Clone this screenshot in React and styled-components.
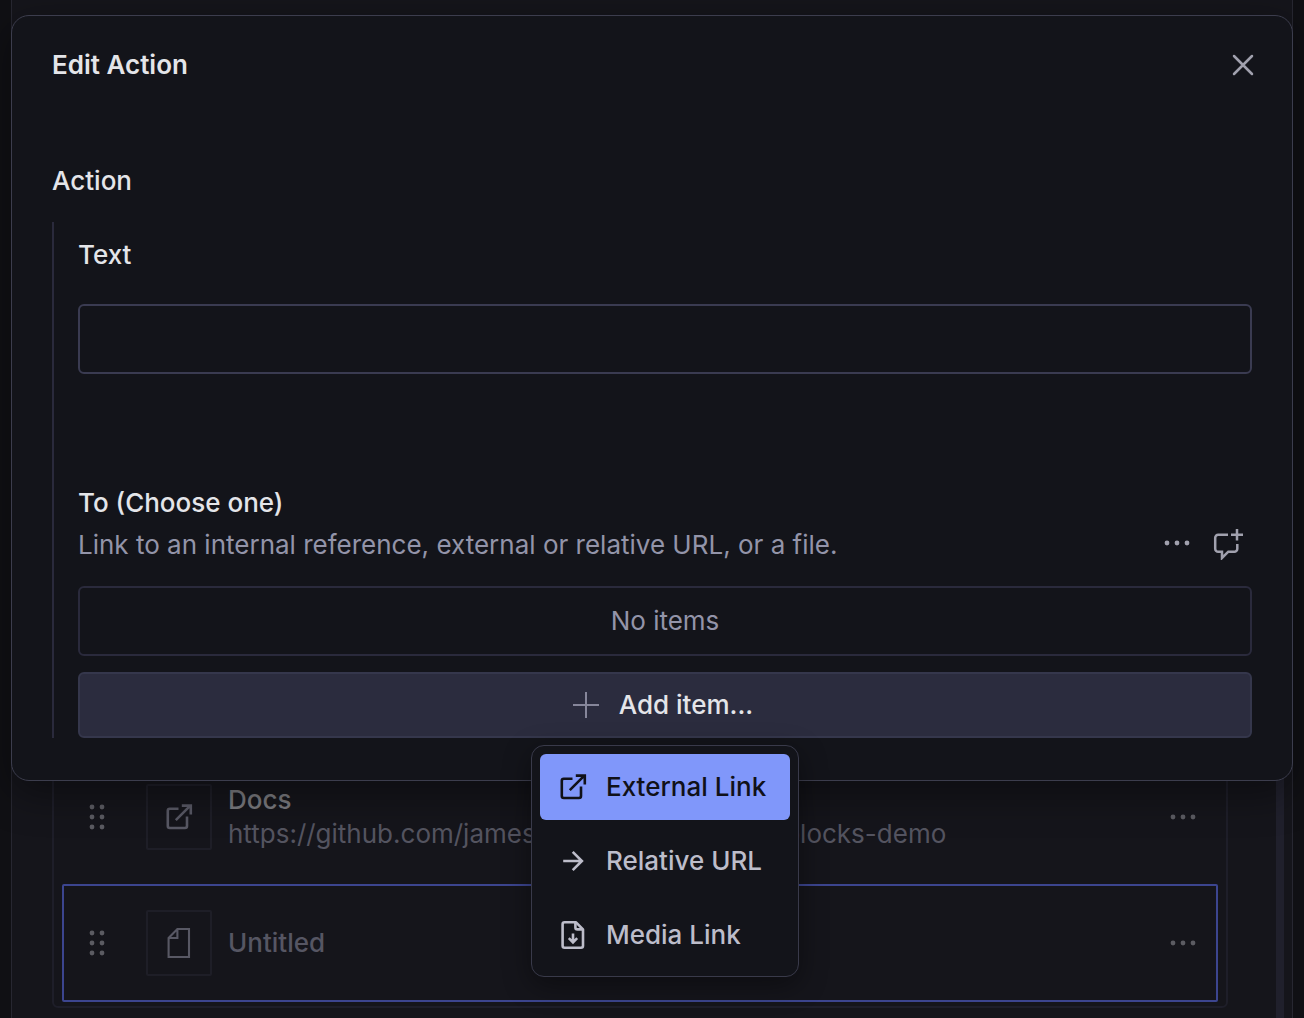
import React from "react";
import styled, { createGlobalStyle, css } from "styled-components";

const GlobalStyle = createGlobalStyle`
  *, *::before, *::after { box-sizing: border-box; }
  body {
    margin: 0;
    background: #101014;
    color: #e4e5e9;
    font-family: Inter, "Liberation Sans", sans-serif;
    font-size: 26px;
    line-height: 34px;
  }
  h1, h2, p, ul { margin: 0; padding: 0; font: inherit; }
  ul { list-style: none; }
  button, input { font: inherit; color: inherit; }
`;

const Page = styled.div`
  position: relative;
  display: grid;
  min-height: 100vh;
  padding: 0 11px;
  overflow: hidden;
`;

const Pane = styled.main`
  display: grid;
  grid-template-columns: minmax(0, 1fr) 8px;
  column-gap: 48px;
  align-items: end;
  padding: 0 8px 0 40px;
  border: solid #272731;
  border-width: 0 1px;
  background: #15151b;
`;

const ItemList = styled.ul`
  display: grid;
  gap: 8px;
  margin-bottom: 10px;
  padding: 8px 8px 4px;
  border: 2px solid #1e1e29;
  border-radius: 6px;
`;

const ScrollThumb = styled.div`
  height: 400px;
  background: #20202c;
`;

const ItemRow = styled.li`
  display: flex;
  align-items: center;
  height: 118px;
  padding: 0 16px;
  border: 2px solid ${(p) => (p.$selected ? "#3c458f" : "transparent")};
  border-radius: 2px;
`;

const IconButton = styled.button`
  display: grid;
  place-items: center;
  flex: none;
  width: 34px;
  height: 34px;
  padding: 0;
  border: 0;
  background: none;
  color: ${(p) => (p.$dim ? "#5b5b62" : "#a1a1ae")};
`;

const Thumb = styled.div`
  display: grid;
  place-items: center;
  flex: none;
  width: 66px;
  height: 66px;
  margin: 0 16px 0 32px;
  border: 2px solid #1e1e27;
  border-radius: 2px;
  color: #585864;
`;

const ItemText = styled.div`
  flex: 1;
  min-width: 0;
`;

const ItemTitle = styled.p`
  color: ${(p) => (p.$muted ? "#565663" : "#79797e")};
  font-weight: 500;
`;

const ItemSubtitle = styled.p`
  color: #545460;
  white-space: nowrap;
`;

const Overlay = styled.div`
  position: absolute;
  inset: 0;
  padding: 15px 11px;
`;

const Dialog = styled.section`
  border: 1px solid #3c3d4d;
  border-radius: 18px;
  background: #13141a;
  box-shadow: 0 12px 40px rgba(0, 0, 0, 0.4);
`;

const DialogHeader = styled.header`
  display: flex;
  align-items: center;
  justify-content: space-between;
  padding: 32px 32px 0 40px;
`;

const DialogTitle = styled.h1`
  font-weight: 600;
`;

const DialogBody = styled.div`
  padding: 82px 40px 42px;
`;

const GroupTitle = styled.h2`
  margin-bottom: 24px;
  font-weight: 500;
`;

const FieldGroup = styled.div`
  padding: 16px 0 0 24px;
  border-left: 2px solid #2a2a3c;
`;

const Label = styled.label`
  display: block;
  font-weight: 500;
`;

const TextInput = styled.input`
  display: block;
  width: 100%;
  height: 70px;
  margin: 32px 0 112px;
  padding: 0 22px;
  border: 2px solid #3a3b51;
  border-radius: 6px;
  outline: none;
  background: transparent;
`;

const FieldHeader = styled.div`
  display: flex;
  align-items: flex-end;
  justify-content: space-between;
  margin-bottom: 24px;
`;

const FieldTitle = styled.h2`
  margin-bottom: 8px;
  font-weight: 500;
`;

const Description = styled.p`
  color: #9394a9;
`;

const FieldActions = styled.div`
  display: flex;
  gap: 16px;
  padding: 0 8px 2px 0;
`;

const EmptyState = styled.div`
  display: grid;
  place-items: center;
  height: 70px;
  margin-bottom: 16px;
  border: 2px solid #2a2a3c;
  border-radius: 6px;
  color: #9394a9;
`;

const MenuAnchor = styled.div`
  position: relative;
`;

const AddButton = styled.button`
  display: flex;
  align-items: center;
  justify-content: center;
  gap: 16px;
  width: 100%;
  height: 66px;
  padding: 0 8px 0 0;
  border: 2px solid #35374c;
  border-radius: 6px;
  background: #2b2c3e;
  font-weight: 500;

  svg { color: #86869a; }
`;

const Menu = styled.div`
  position: absolute;
  top: calc(100% + 7px);
  left: 50%;
  display: grid;
  gap: 8px;
  width: 268px;
  padding: 8px;
  border: 1px solid #393a4a;
  border-radius: 13px;
  background: #13141a;
  box-shadow: 0 8px 28px rgba(0, 0, 0, 0.4);
  transform: translateX(-50%);
`;

const MenuItem = styled.button`
  display: flex;
  align-items: center;
  gap: 16px;
  height: 66px;
  padding: 0 16px;
  border: 0;
  border-radius: 6px;
  background: none;
  color: #bdbdca;
  font-weight: 500;
  white-space: nowrap;

  ${(p) => p.$active && css`
    background: #8097fa;
    color: #101118;
  `}
`;

const Svg = styled.svg`
  display: block;
  flex: none;
  width: 34px;
  height: 34px;
  fill: none;
  stroke: currentColor;
  stroke-width: ${(p) => p.$weight || 2.6};
`;

const Dots = styled(Svg)`
  fill: currentColor;
  stroke: none;
`;

const Icon = ({ weight, children }) => (
  <Svg viewBox="0 0 34 34" $weight={weight} aria-hidden="true">{children}</Svg>
);

const ExternalIcon = () => (
  <Icon>
    <path d="M16.5 8.8H7.8a2 2 0 0 0-2 2V26a2 2 0 0 0 2 2H23a2 2 0 0 0 2-2v-9.5" />
    <path d="M13.8 20.2 28.3 5.7M19.8 5.6h9v9" />
  </Icon>
);

const ArrowIcon = () => (
  <Icon><path d="M7.2 17H26M16.7 7.8l9.2 9.2-9.2 9.2" /></Icon>
);

const FileDownIcon = () => (
  <Icon>
    <path d="M19.8 4.2H8.6a2 2 0 0 0-2 2v21.6a2 2 0 0 0 2 2H25a2 2 0 0 0 2-2V11.4z" strokeLinejoin="round" />
    <path d="M19.4 4.2v5.2a2 2 0 0 0 2 2H27" />
    <path d="M17 15.4v9M12.8 20.2l4.2 4.2 4.2-4.2" />
  </Icon>
);

const DocumentIcon = () => (
  <Icon weight={2.1}><path d="M15.4 3H27v28H6.6V12zM15.4 3v9H6.6" /></Icon>
);

const PlusIcon = () => (
  <Icon weight={2}><path d="M17 4v26M4 17h26" /></Icon>
);

const CloseIcon = () => (
  <Icon weight={2.5}><path d="m8 8 18 18M26 8 8 26" strokeLinecap="round" /></Icon>
);

const CommentAddIcon = () => (
  <Icon weight={2.5}>
    <path d="M18 8.7H8.2a3 3 0 0 0-3 3v11a3 3 0 0 0 3 3H12V32l6.3-6.3h6a3 3 0 0 0 3-3V18" />
    <path d="M27 3v11.6M21 8.7h12" />
  </Icon>
);

const EllipsisIcon = () => (
  <Dots viewBox="0 0 34 34" aria-hidden="true">
    {[7, 17, 27].map((x) => <circle key={x} cx={x} cy="17" r="2.4" />)}
  </Dots>
);

const DragIcon = () => (
  <Dots viewBox="0 0 34 34" aria-hidden="true">
    {[7, 17, 27].flatMap((y) => [12, 22].map((x) => (
      <circle key={`${x}-${y}`} cx={x} cy={y} r="2.4" />
    )))}
  </Dots>
);

const items = [
  { title: "Docs", url: "https://github.com/jamessingleton/sanity-v3-blocks-demo", icon: ExternalIcon },
  { title: "Untitled", icon: DocumentIcon, selected: true },
];

const menuItems = [
  { label: "External Link", icon: ExternalIcon, active: true },
  { label: "Relative URL", icon: ArrowIcon },
  { label: "Media Link", icon: FileDownIcon },
];

export default function App() {
  return (
    <>
      <GlobalStyle />
      <Page>
        <Pane>
          <ItemList>
            {items.map(({ title, url, icon: ItemIcon, selected }) => (
              <ItemRow key={title} $selected={selected}>
                <IconButton $dim aria-label="Drag to reorder"><DragIcon /></IconButton>
                <Thumb><ItemIcon /></Thumb>
                <ItemText>
                  <ItemTitle $muted={!url}>{title}</ItemTitle>
                  {url && <ItemSubtitle>{url}</ItemSubtitle>}
                </ItemText>
                <IconButton $dim aria-label="Item options"><EllipsisIcon /></IconButton>
              </ItemRow>
            ))}
          </ItemList>
          <ScrollThumb />
        </Pane>
        <Overlay>
          <Dialog role="dialog" aria-modal="true" aria-labelledby="dialog-title">
            <DialogHeader>
              <DialogTitle id="dialog-title">Edit Action</DialogTitle>
              <IconButton aria-label="Close dialog"><CloseIcon /></IconButton>
            </DialogHeader>
            <DialogBody>
              <GroupTitle id="group-title">Action</GroupTitle>
              <FieldGroup role="group" aria-labelledby="group-title">
                <Label htmlFor="action-text">Text</Label>
                <TextInput id="action-text" type="text" />
                <FieldHeader>
                  <div>
                    <FieldTitle>To (Choose one)</FieldTitle>
                    <Description>Link to an internal reference, external or relative URL, or a file.</Description>
                  </div>
                  <FieldActions>
                    <IconButton aria-label="Field actions"><EllipsisIcon /></IconButton>
                    <IconButton aria-label="Add comment"><CommentAddIcon /></IconButton>
                  </FieldActions>
                </FieldHeader>
                <EmptyState>No items</EmptyState>
                <MenuAnchor>
                  <AddButton type="button" aria-haspopup="menu" aria-expanded="true">
                    <PlusIcon />
                    Add item...
                  </AddButton>
                  <Menu role="menu">
                    {menuItems.map(({ label, icon: MenuIcon, active }) => (
                      <MenuItem key={label} type="button" role="menuitem" $active={active}>
                        <MenuIcon />
                        {label}
                      </MenuItem>
                    ))}
                  </Menu>
                </MenuAnchor>
              </FieldGroup>
            </DialogBody>
          </Dialog>
        </Overlay>
      </Page>
    </>
  );
}
